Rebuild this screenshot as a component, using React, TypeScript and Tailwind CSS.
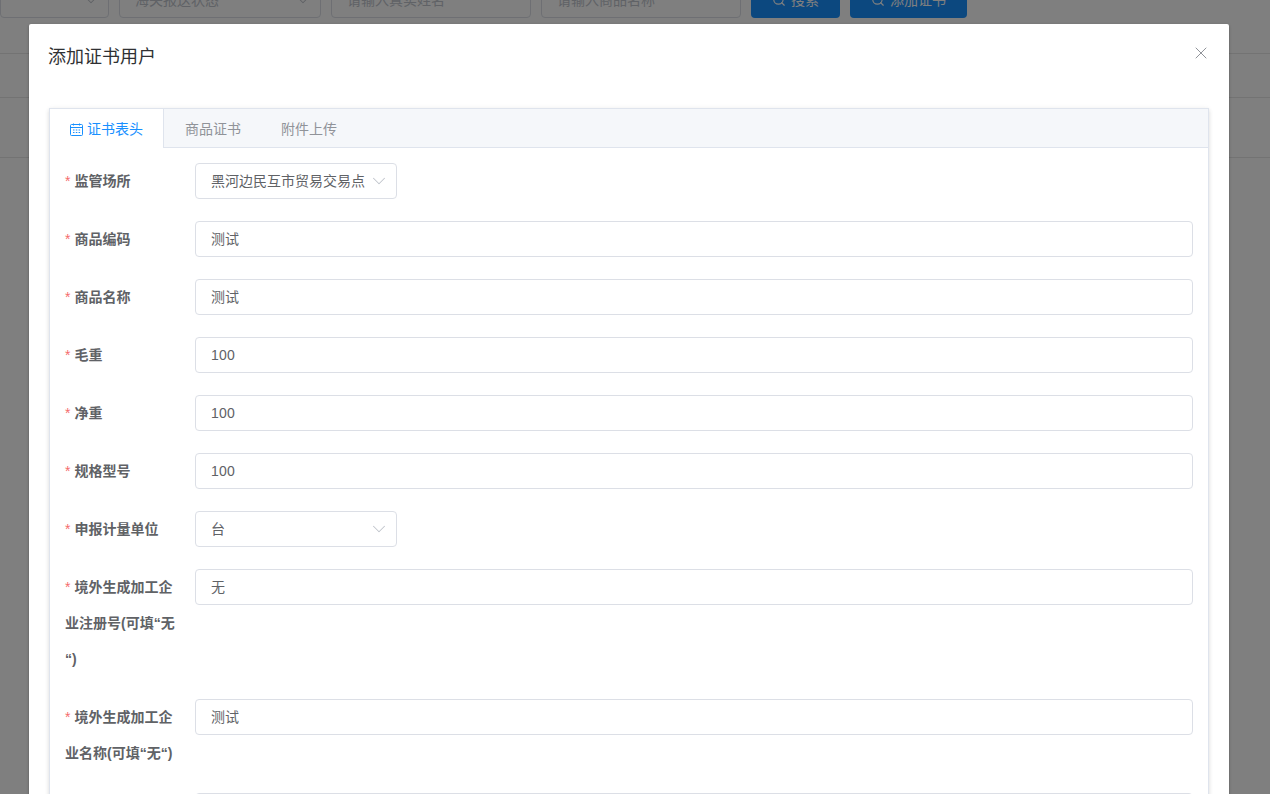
import { ChevronDown, Search, X } from 'lucide-react';

const FONT = "font-['Liberation_Sans','Noto_Sans_CJK_SC',sans-serif]";

// one row of the form; long labels wrap with a 36px line height
function Field({
  label,
  value,
  select,
  width,
}: {
  label: string;
  value: string;
  select?: boolean;
  width?: string;
}) {
  return (
    <div className="mb-[22px] flex">
      <label className="w-[145px] shrink-0 pl-[15px] pr-[16px] text-[14px] leading-[36px] font-bold text-[#606266] [line-break:anywhere]">
        <span className="mr-[4px] font-normal text-[#f56c6c]">*</span>
        {label}
      </label>
      <div
        className={`flex h-[36px] items-center justify-between rounded-[4px] border border-[#dcdfe6] bg-white pl-[15px] pr-[6px] text-[14px] text-[#606266] ${
          width ?? 'flex-1'
        }`}
      >
        <span className={`truncate ${/^\d/.test(value) ? 'tracking-[0.2px]' : ''}`}>{value}</span>
        {select && <ChevronDown className="ml-[2px] h-[22px] w-[22px] shrink-0 text-[#c0c4cc]" strokeWidth={1.1} />}
      </div>
    </div>
  );
}

function Backdrop() {
  return (
    <div className="h-full overflow-hidden bg-white">
      <div className="flex h-[54px] gap-[10px] border-b border-[#e6e6e6]">
        <div className="mt-[-18px] flex h-[36px] w-[109px] items-center justify-end rounded-[4px] border border-[#dcdfe6] pr-[6px]">
          <ChevronDown className="h-[22px] w-[22px] text-[#c0c4cc]" strokeWidth={1.1} />
        </div>
        <div className="mt-[-18px] flex h-[36px] w-[202px] items-center justify-between rounded-[4px] border border-[#dcdfe6] pl-[15px] pr-[6px] text-[14px] text-[#c0c4cc]">
          海关报送状态
          <ChevronDown className="h-[22px] w-[22px]" strokeWidth={1.1} />
        </div>
        <div className="mt-[-18px] flex h-[36px] w-[200px] items-center rounded-[4px] border border-[#dcdfe6] pl-[15px] text-[14px] text-[#c0c4cc]">
          请输入真实姓名
        </div>
        <div className="mt-[-18px] flex h-[36px] w-[200px] items-center rounded-[4px] border border-[#dcdfe6] pl-[15px] text-[14px] text-[#c0c4cc]">
          请输入商品名称
        </div>
        <div className="mt-[-18px] flex h-[36px] w-[89px] items-center justify-center gap-[5px] rounded-[4px] bg-[#1890ff] text-[14px] text-white">
          <Search className="h-[14px] w-[14px]" />
          搜索
        </div>
        <div className="mt-[-18px] flex h-[36px] w-[117px] items-center justify-center gap-[5px] rounded-[4px] bg-[#1890ff] text-[14px] text-white">
          <Search className="h-[14px] w-[14px]" />
          添加证书
        </div>
      </div>
      <div className="h-[44px] border-b border-[#e6e6e6]" />
      <div className="h-[60px] border-b border-[#e6e6e6]" />
    </div>
  );
}

export default function App() {
  return (
    <div className={`relative h-[794px] w-[1270px] overflow-hidden ${FONT}`}>
      <Backdrop />
      <div className="absolute inset-0 bg-black/50" />

      <div className="absolute left-[29px] top-[24px] h-[800px] w-[1200px] rounded-[2px] bg-white shadow-[0_1px_3px_rgba(0,0,0,0.3)]">
        <div className="relative pl-[19px] pt-[21px] pb-[9px]">
          <h2 className="text-[18px] leading-[24px] text-[#303133]">添加证书用户</h2>
          <X className="absolute right-[18px] top-[19px] h-[20px] w-[20px] text-[#909399]" strokeWidth={1.2} />
        </div>

        <div className="mx-[20px] mt-[30px] border border-[#dfe4ed] bg-white shadow-[0_2px_4px_0_rgba(0,0,0,0.12),0_0_6px_0_rgba(0,0,0,0.04)]">
          <div className="flex h-[39px] border-b border-[#dfe4ed] bg-[#f5f7fa] text-[14px] text-[#909399]">
            <div className="mb-[-1px] flex h-[39px] items-center gap-[3px] border-r border-[#dfe4ed] bg-white pl-[20px] pr-[20px] pt-[2px] text-[#1890ff]">
              <svg className="h-[14px] w-[14px]" viewBox="0 0 14 14" fill="none" stroke="currentColor" strokeWidth="1">
                <rect x="0.5" y="1.5" width="12" height="11" rx="1" />
                <path d="M0.5 4.5h12M3.5 0.5v2M9.5 0.5v2M3 7h1.5M5.8 7h1.5M8.6 7h1.5M3 9.5h1.5M5.8 9.5h1.5M8.6 9.5h1.5" />
              </svg>
              证书表头
            </div>
            <div className="flex items-center pl-[21px] pr-[20px] pt-[2px]">商品证书</div>
            <div className="flex items-center px-[20px] pt-[2px]">附件上传</div>
          </div>

          <div className="pr-[15px] pt-[15px]">
            <Field label="监管场所" value="黑河边民互市贸易交易点" select width="w-[202px]" />
            <Field label="商品编码" value="测试" />
            <Field label="商品名称" value="测试" />
            <Field label="毛重" value="100" />
            <Field label="净重" value="100" />
            <Field label="规格型号" value="100" />
            <Field label="申报计量单位" value="台" select width="w-[202px]" />
            <Field label="境外生成加工企业注册号(可填“无“)" value="无" />
            <Field label="境外生成加工企业名称(可填“无“)" value="测试" />
            <Field label="" value="" />
          </div>
        </div>
      </div>
    </div>
  );
}
